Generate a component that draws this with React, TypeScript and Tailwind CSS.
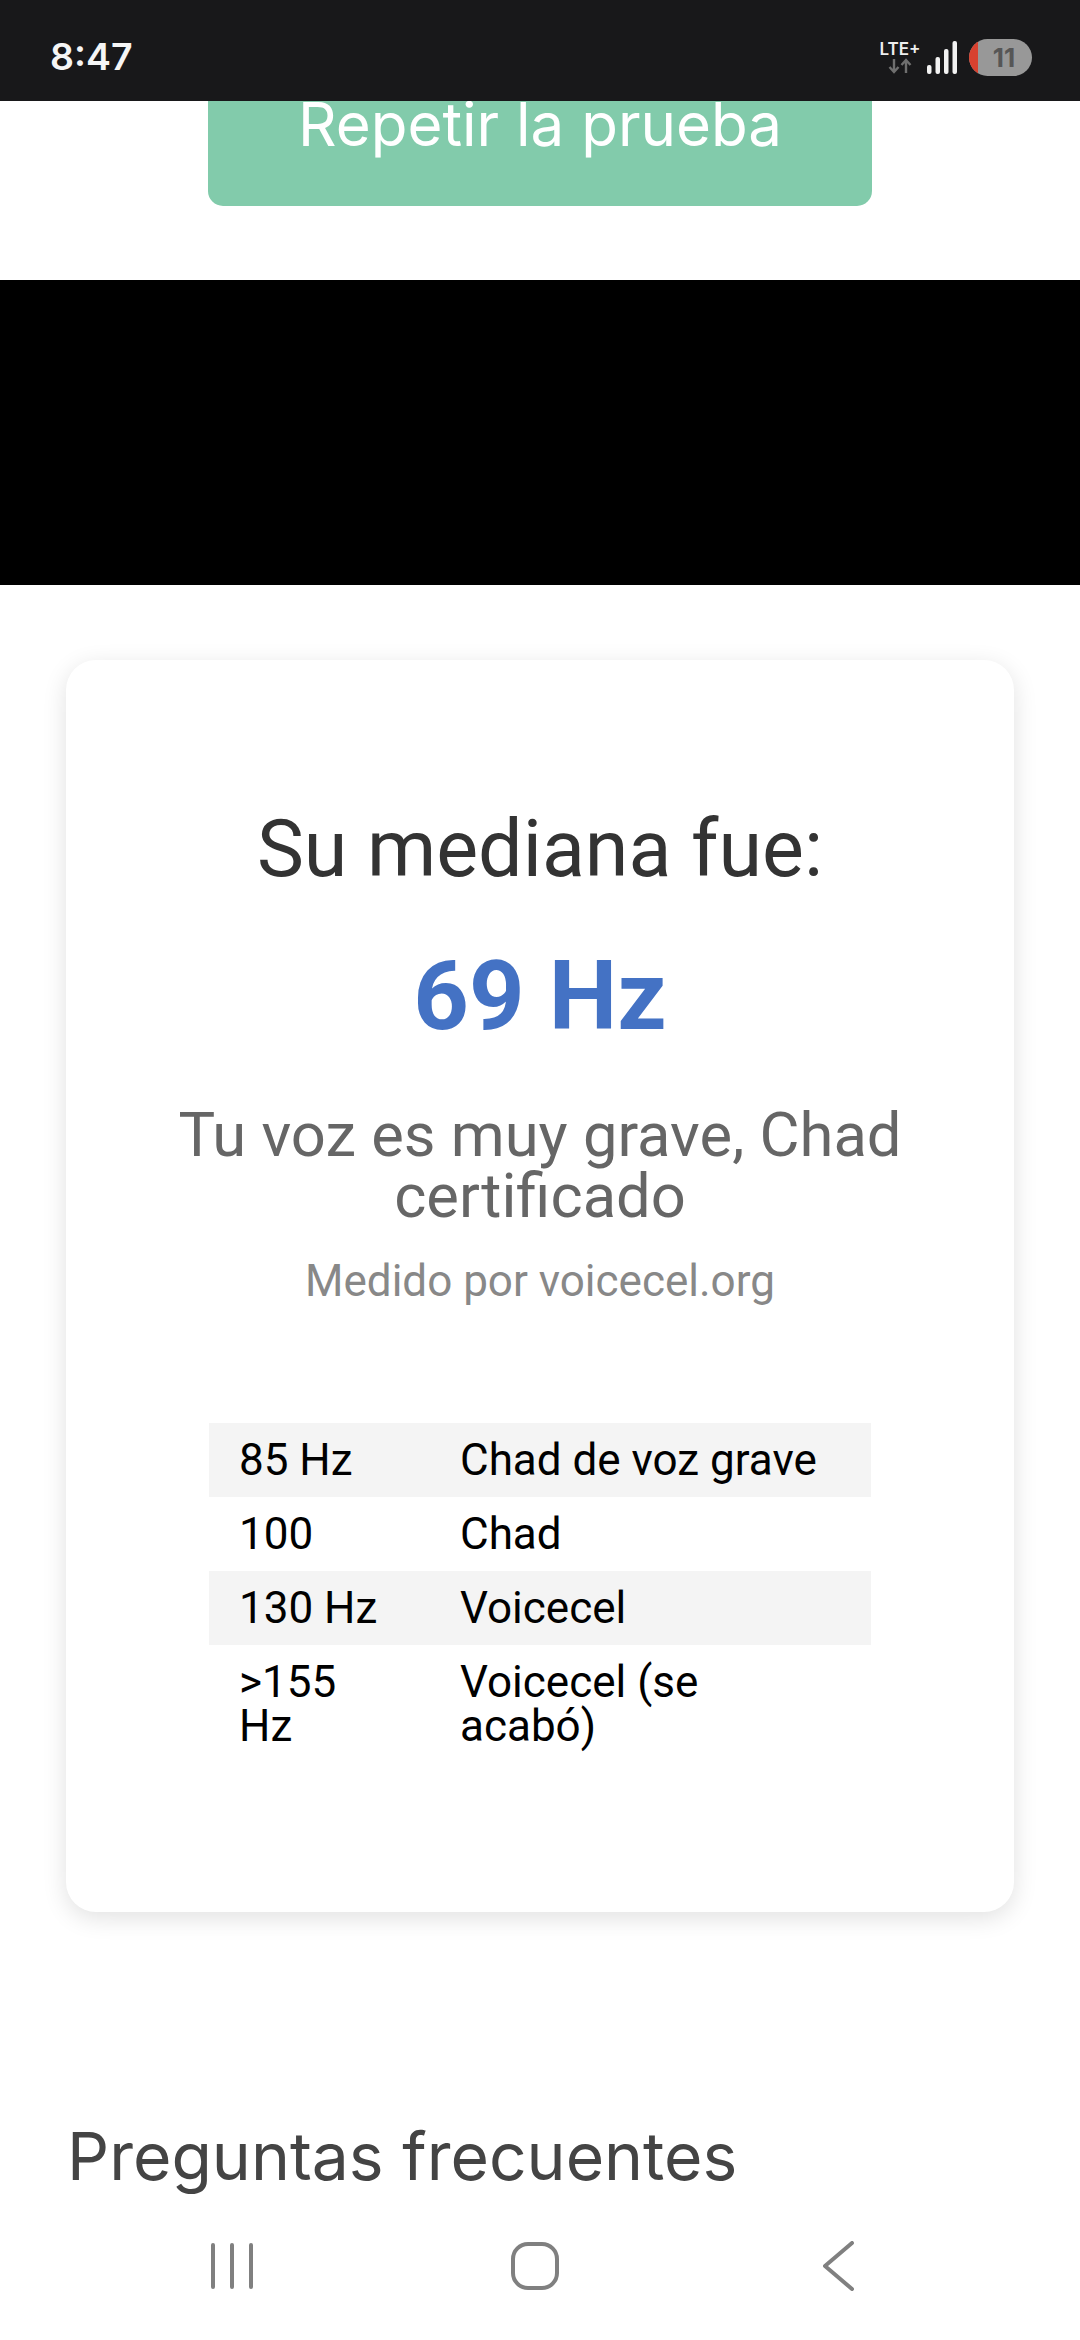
import React from "react";

const rows = [
  { hz: <>85 Hz</>, label: <>Chad de voz grave</> },
  { hz: <>100</>, label: <>Chad</> },
  { hz: <>130 Hz</>, label: <>Voicecel</> },
  { hz: <>&gt;155<br />Hz</>, label: <>Voicecel (se<br />acabó)</> },
];

function StatusBar() {
  return (
    <div className="relative z-10 flex h-[101px] shrink-0 items-start justify-between bg-[#18181a] pl-[50px] pr-[48px]">
      <span className="mt-[33px] font-['Inter',sans-serif] text-[37.500px] leading-[47px] font-semibold text-[#f5f5f5]">8:47</span>
      <div className="mt-[39px] flex items-start">
        {/* network type */}
        <div className="mt-[1px] flex w-[44px] flex-col items-center">
          <span className="font-['Inter',sans-serif] text-[17px] leading-[18px] font-semibold text-[#eeeeee]">LTE+</span>
          <svg width="24" height="16" viewBox="0 0 24 16" fill="none" stroke="#6f6f6f" strokeWidth="2.4">
            <path d="M6 1v12M1.5 9 6 14l4.5-5" />
            <path d="M18 15V3M13.5 7 18 2l4.500 5" />
          </svg>
        </div>
        {/* signal */}
        <svg className="mt-[2px] ml-[5px]" width="30" height="34" viewBox="0 0 30 34" fill="#f2f2f2">
          <rect x="0" y="24" width="4.500" height="9" rx="2" />
          <rect x="8.500" y="16" width="4.500" height="17" rx="2" />
          <rect x="17" y="8" width="4.500" height="25" rx="2" />
          <rect x="25.500" y="0" width="4.500" height="33" rx="2" />
        </svg>
        {/* battery */}
        <div className="ml-[12px] flex h-[37px] w-[63px] overflow-hidden rounded-full bg-[#989898]">
          <div className="h-full w-[9px] shrink-0 bg-[#d8412f]" />
          <span className="flex-1 pr-[2px] text-center font-['Inter',sans-serif] text-[26px] leading-[37px] font-bold text-[#565656]">11</span>
        </div>
      </div>
    </div>
  );
}

function NavBar() {
  return (
    <div className="flex h-[48px] items-center">
      <svg className="ml-[211px]" width="42" height="48" viewBox="0 0 42 48" fill="none" stroke="#808080" strokeWidth="4" strokeLinecap="round">
        <path d="M2 3v42M21 3v42M40 3v42" />
      </svg>
      <div className="ml-[258px] h-[48px] w-[48px] rounded-[17px] border-[4px] border-[#808080]" />
      <svg className="ml-[264px]" width="32" height="50" viewBox="0 0 32 50" fill="none" stroke="#808080" strokeWidth="4" strokeLinecap="round" strokeLinejoin="round">
        <path d="M29 2 2 25l27 23" />
      </svg>
    </div>
  );
}

export default function App() {
  return (
    <div className="flex h-[2340px] w-[1080px] flex-col overflow-hidden bg-white">
      <StatusBar />

      <div className="flex justify-center">
        <button className="h-[105px] w-[664px] rounded-b-[15px] bg-[#82cbab] font-['Inter',sans-serif] text-[60px] leading-[65px] text-white">
          <span className="block -translate-y-[29px]">Repetir la prueba</span>
        </button>
      </div>

      {/* ad slot */}
      <div className="mt-[74px] h-[305px] shrink-0 bg-black" />

      <div className="mx-[66px] mt-[75px] h-[1252px] shrink-0 rounded-[30px] bg-white pt-[147px] text-center font-['Roboto',sans-serif] shadow-[0_6px_24px_rgba(0,0,0,0.12)]">
        <h2 className="text-[79px] leading-[84px] text-[#333333]">Su mediana fue:</h2>
        <div className="mt-[53px] text-[97px] leading-[105px] font-bold text-[#4472c4]">69 Hz</div>
        <p className="mx-auto mt-[56px] w-[760px] text-[61.500px] leading-[61px] text-[#666666]">Tu voz es muy grave, Chad certificado</p>
        <p className="mt-[29px] text-[44px] leading-[50px] text-[#888888]">Medido por voicecel.org</p>

        <table className="mx-auto mt-[117px] w-[662px] table-fixed border-collapse text-left text-[44px] leading-[44px] text-black">
          <colgroup>
            <col className="w-[250px]" />
            <col />
          </colgroup>
          <tbody>
            {rows.map((row, i) => (
              <tr key={i} className={i % 2 === 0 ? "bg-[#f4f4f4]" : ""}>
                <td className="py-[15px] pl-[30px] align-top">{row.hz}</td>
                <td className="py-[15px] pl-[1px] align-top">{row.label}</td>
              </tr>
            ))}
          </tbody>
        </table>
      </div>

      <h2 className="mt-[204px] ml-[67px] font-['Inter',sans-serif] text-[66px] leading-[80px] text-[#444444]">Preguntas frecuentes</h2>

      <div className="mt-[46px]">
        <NavBar />
      </div>
    </div>
  );
}
